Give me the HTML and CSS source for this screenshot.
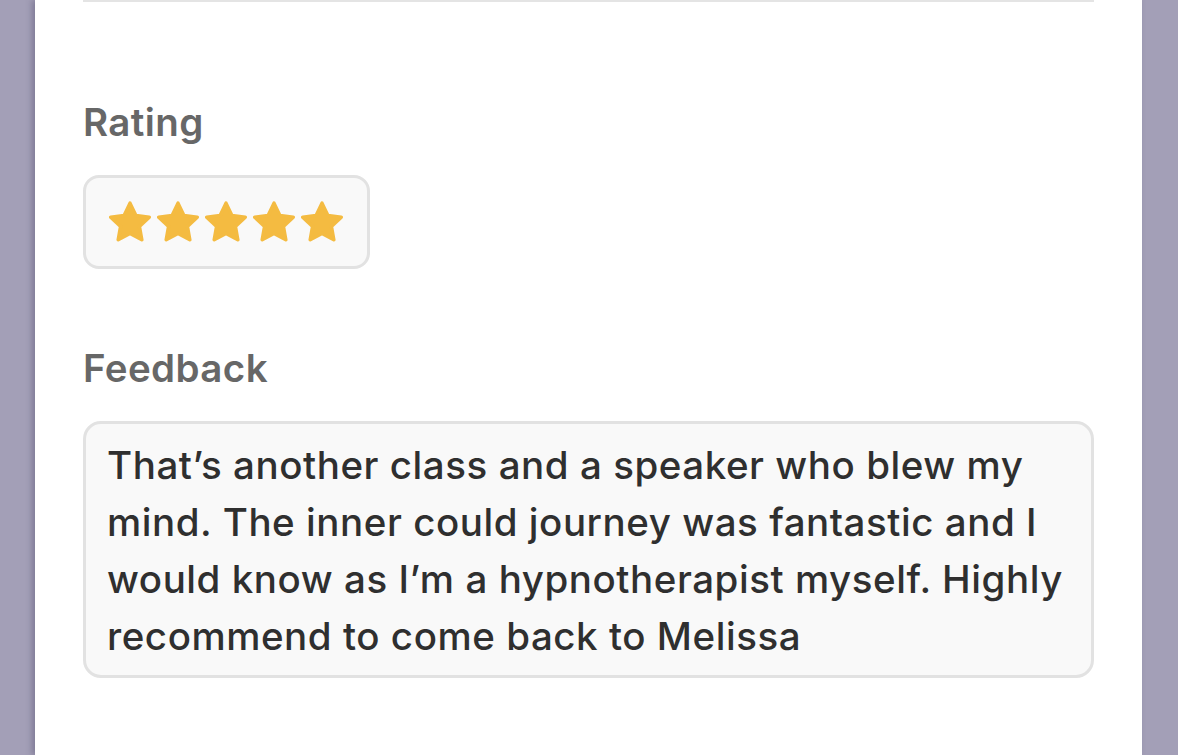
FILE: index.html
```html
<!DOCTYPE html>
<html lang="en">
<head>
    <meta charset="UTF-8">
    <meta name="viewport" content="width=device-width, initial-scale=1.0">
    <title>Review</title>
    <link rel="stylesheet" href="styles.css">
</head>
<body>
    <div class="sheet">
        <div class="divider"></div>

        <div class="field rating-field">
            <div class="field-label">Rating</div>
            <div class="stars-box">
                <svg class="star" viewBox="2.4 1.8 19.2 19.2"><path d="M12 2.8l2.7 5.6 6.1.8-4.5 4.2 1.1 6.1L12 16.6l-5.4 2.9 1.1-6.1-4.5-4.2 6.1-.8z"/></svg>
                <svg class="star" viewBox="2.4 1.8 19.2 19.2"><path d="M12 2.8l2.7 5.6 6.1.8-4.5 4.2 1.1 6.1L12 16.6l-5.4 2.9 1.1-6.1-4.5-4.2 6.1-.8z"/></svg>
                <svg class="star" viewBox="2.4 1.8 19.2 19.2"><path d="M12 2.8l2.7 5.6 6.1.8-4.5 4.2 1.1 6.1L12 16.6l-5.4 2.9 1.1-6.1-4.5-4.2 6.1-.8z"/></svg>
                <svg class="star" viewBox="2.4 1.8 19.2 19.2"><path d="M12 2.8l2.7 5.6 6.1.8-4.5 4.2 1.1 6.1L12 16.6l-5.4 2.9 1.1-6.1-4.5-4.2 6.1-.8z"/></svg>
                <svg class="star" viewBox="2.4 1.8 19.2 19.2"><path d="M12 2.8l2.7 5.6 6.1.8-4.5 4.2 1.1 6.1L12 16.6l-5.4 2.9 1.1-6.1-4.5-4.2 6.1-.8z"/></svg>
            </div>
        </div>

        <div class="field">
            <div class="field-label">Feedback</div>
            <div class="feedback-box">That’s another class and a speaker who blew my mind. The inner could journey was fantastic and I would know as I’m a hypnotherapist myself. Highly recommend to come back to Melissa</div>
        </div>
    </div>
</body>
</html>
```

FILE: styles.css
```css
html, body {
    margin: 0;
    padding: 0;
    height: 100%;
}
body {
    background-color: #a39fb7;
    font-family: Inter, "Noto Sans", sans-serif;
    overflow: hidden;
}
.sheet {
    background: #fff;
    margin: 0 36px 0 35px;
    height: 100%;
    padding: 0 48px 0 48px;
    box-shadow: -3px 0 6px rgba(60, 55, 90, 0.35);
}
.divider {
    height: 2px;
    background: #e4e4e4;
}
.field {
    padding-top: 76px;
}
.rating-field {
    padding-top: 97px;
}
.field-label {
    font-size: 38.5px;
    font-weight: 600;
    letter-spacing: 0.4px;
    color: #676767;
    line-height: 46px;
    margin-bottom: 30px;
}
.stars-box {
    display: flex;
    align-items: center;
    gap: 6px;
    width: 287px;
    height: 94px;
    box-sizing: border-box;
    padding: 0 0 0 23px;
    border: 3px solid #e2e2e2;
    border-radius: 16px;
    background: #f9f9f9;
}
.star {
    width: 42px;
    height: 42px;
}
.star path {
    fill: #f4bb41;
    stroke: #f4bb41;
    stroke-width: 1.6;
    stroke-linejoin: round;
}
.feedback-box {
    box-sizing: border-box;
    height: 257px;
    padding: 13px 20px 0 21px;
    border: 3px solid #e2e2e2;
    border-radius: 18px;
    background: #f9f9f9;
    color: #2f2f2f;
    font-size: 38.5px;
    font-weight: 500;
    letter-spacing: 0.55px;
    line-height: 57px;
}
```
